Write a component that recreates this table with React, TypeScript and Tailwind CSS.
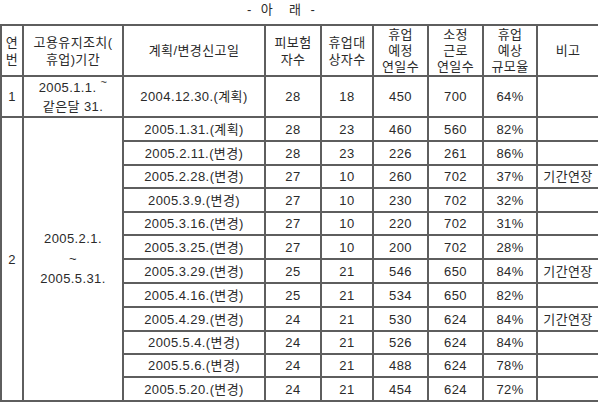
const rows = [
  ["2005.1.31.(계획)", "28", "23", "460", "560", "82%", ""],
  ["2005.2.11.(변경)", "28", "23", "226", "261", "86%", ""],
  ["2005.2.28.(변경)", "27", "10", "260", "702", "37%", "기간연장"],
  ["2005.3.9.(변경)", "27", "10", "230", "702", "32%", ""],
  ["2005.3.16.(변경)", "27", "10", "220", "702", "31%", ""],
  ["2005.3.25.(변경)", "27", "10", "200", "702", "28%", ""],
  ["2005.3.29.(변경)", "25", "21", "546", "650", "84%", "기간연장"],
  ["2005.4.16.(변경)", "25", "21", "534", "650", "82%", ""],
  ["2005.4.29.(변경)", "24", "21", "530", "624", "84%", "기간연장"],
  ["2005.5.4.(변경)", "24", "21", "526", "624", "84%", ""],
  ["2005.5.6.(변경)", "24", "21", "488", "624", "78%", ""],
  ["2005.5.20.(변경)", "24", "21", "454", "624", "72%", ""],
];

const heights = [24, 24, 23, 24, 23, 24, 24, 24, 24, 23, 23, 24];

const cell = "border-2 border-[#5e5e5e] text-center align-middle p-0";

export default function App() {
  return (
    <div
      className="w-[598px] h-[402px] bg-white text-[#2a2a2a] text-[13px] leading-[17px] tracking-[0.4px] overflow-hidden"
      style={{ fontFamily: '"Liberation Sans", "Noto Sans CJK KR", sans-serif' }}
    >
      <div className="h-[24px] flex items-start pt-[1px] pl-[247px]">
        <span>-</span>
        <span className="ml-[9px]">아</span>
        <span className="ml-[16px]">래</span>
        <span className="ml-[9px]">-</span>
      </div>
      <table className="table-fixed border-collapse w-[598px]">
        <colgroup>
          <col className="w-[22px]" />
          <col className="w-[100px]" />
          <col className="w-[142px]" />
          <col className="w-[56px]" />
          <col className="w-[52px]" />
          <col className="w-[55px]" />
          <col className="w-[55px]" />
          <col className="w-[54px]" />
          <col className="w-[62px]" />
        </colgroup>
        <tbody>
          <tr className="h-[51px]">
            <td className={cell}>연<br />번</td>
            <td className={cell}>고용유지조치(<br />휴업)기간</td>
            <td className={cell}>계획/변경신고일</td>
            <td className={cell}>피보험<br />자수</td>
            <td className={cell}>휴업대<br />상자수</td>
            <td className={cell + " leading-[16px]"}>휴업<br />예정<br />연일수</td>
            <td className={cell + " leading-[16px]"}>소정<br />근로<br />연일수</td>
            <td className={cell + " leading-[16px]"}>휴업<br />예상<br />규모율</td>
            <td className={cell}>비고</td>
          </tr>
          <tr className="h-[41px]">
            <td className={cell}>1</td>
            <td className={cell + " leading-[19px]"}>
              2005.1.1. <sup className="text-[11px]">~</sup>
              <br />같은달 31.
            </td>
            <td className={cell}>2004.12.30.(계획)</td>
            <td className={cell}>28</td>
            <td className={cell}>18</td>
            <td className={cell}>450</td>
            <td className={cell}>700</td>
            <td className={cell}>64%</td>
            <td className={cell}></td>
          </tr>
          {rows.map((r, i) => (
            <tr key={i} style={{ height: heights[i] }}>
              {i === 0 && (
                <>
                  <td rowSpan={12} className={cell}>2</td>
                  <td rowSpan={12} className={cell + " leading-[20px]"}>
                    2005.2.1.<br />~<br />2005.5.31.
                  </td>
                </>
              )}
              {r.map((v, j) => (
                <td key={j} className={cell}>{v}</td>
              ))}
            </tr>
          ))}
        </tbody>
      </table>
    </div>
  );
}
